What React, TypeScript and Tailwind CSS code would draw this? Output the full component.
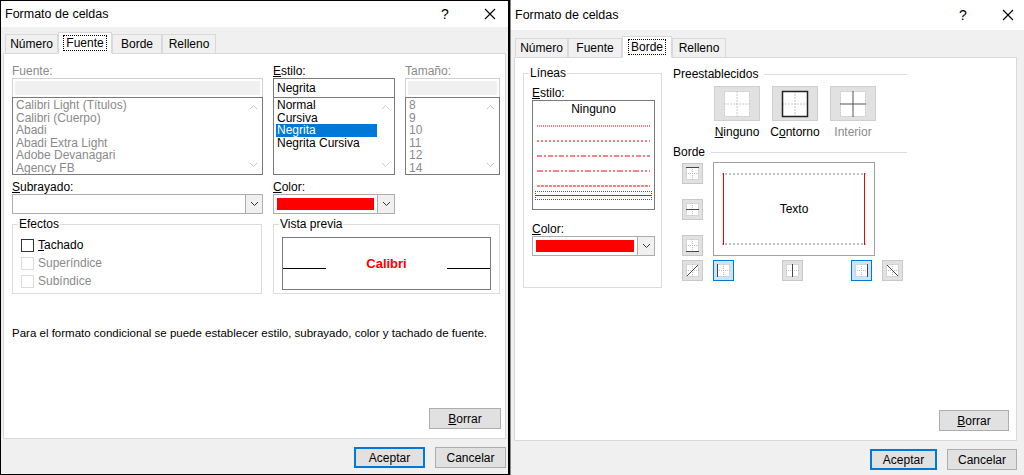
import React from "react";

const F = { fontFamily: '"Segoe UI","Liberation Sans",Arial,sans-serif' };

function TitleBar() {
  return (
    <div className="flex items-center h-[26px] bg-white pl-[4px] text-[12.5px] text-black shrink-0">
      <span className="flex-1">Formato de celdas</span>
      <span className="w-[43px] text-[14px]">?</span>
      <svg width="12" height="12" className="mr-[12px]"><path d="M1 1L11 11M11 1L1 11" stroke="#000" strokeWidth="1.1" /></svg>
    </div>
  );
}

function Tabs({ active }: { active: string }) {
  const tabs = [["Número", 53], ["Fuente", 54], ["Borde", 50], ["Relleno", 54]] as const;
  return (
    <div className="flex items-end h-[26px] pl-[4px] bg-[#f0f0f0] shrink-0 relative z-10">
      {tabs.map(([t, w]) =>
        t === active ? (
          <div key={t} style={{ width: w }} className="h-[22px] -mb-px bg-white border border-[#d9d9d9] border-b-white flex items-center justify-center text-[12px]">
            <span className="border border-dotted border-black px-[2px] leading-[14px]">{t}</span>
          </div>
        ) : (
          <div key={t} style={{ width: w }} className="h-[19px] bg-[#f0f0f0] border border-[#d9d9d9] border-b-0 flex items-center justify-center text-[12px]">{t}</div>
        )
      )}
    </div>
  );
}

function Btn({ children, w, primary }: { children: React.ReactNode; w: number; primary?: boolean }) {
  return (
    <div style={{ width: w }} className={`h-[21px] flex items-center justify-center text-[12px] bg-[#e1e1e1] ${primary ? "border-2 border-[#0078d7]" : "border border-[#adadad]"}`}>{children}</div>
  );
}

function Arrow({ up }: { up?: boolean }) {
  return <svg width="9" height="6"><path d={up ? "M1 5L4.5 1.5L8 5" : "M1 1L4.5 4.5L8 1"} stroke="#c8c8c8" fill="none" /></svg>;
}

function ListBox({ w, items, sel, gray }: { w: number; items: string[]; sel?: number; gray?: boolean }) {
  return (
    <div style={{ width: w }} className="h-[78px] border border-[#7a7a7a] bg-white flex">
      <div className="flex-1 pt-[1px] pl-[2px] text-[12px] leading-[12.6px]">
        {items.map((t, i) => (
          <div key={t} className={`${i === sel ? "bg-[#0078d7] text-white" : gray ? "text-[#8a8a8a]" : "text-black"} pl-[1px]`}>{t}</div>
        ))}
      </div>
      <div className="w-[17px] flex flex-col justify-between items-center py-[6px]"><Arrow up /><Arrow /></div>
    </div>
  );
}

function Combo({ w, red }: { w: number; red?: boolean }) {
  return (
    <div style={{ width: w }} className="h-[20px] border border-[#adadad] bg-white flex">
      <div className="flex-1 p-[3px]">{red && <div className="h-full bg-[#ff0000]" />}</div>
      <div className="w-[17px] border-l border-[#adadad] bg-[#f0f0f0] flex items-center justify-center">
        <svg width="9" height="6"><path d="M1 1L4.5 4.5L8 1" stroke="#333" fill="none" /></svg>
      </div>
    </div>
  );
}

function Group({ title, className, children }: { title: string; className: string; children?: React.ReactNode }) {
  return (
    <div className={`relative border border-[#dcdcdc] ${className}`}>
      <span className="absolute -top-[8px] left-[5px] bg-white px-[1px] text-[12px] leading-[14px]">{title}</span>
      {children}
    </div>
  );
}

function Check({ label, dis, u }: { label: string; dis?: boolean; u?: boolean }) {
  return (
    <div className="flex items-center gap-[4px] h-[18px]">
      <div className={`w-[13px] h-[13px] border ${dis ? "border-[#dcdcdc]" : "border-[#333]"} bg-white`} />
      <span className={dis ? "text-[#8a8a8a]" : ""}>{u ? <><u>T</u>achado</> : label}</span>
    </div>
  );
}

function Footer() {
  return (
    <div className="flex justify-end gap-[10px] pr-[2px] pt-[8px] h-[35px] bg-[#f0f0f0] shrink-0">
      <Btn w={71} primary>Aceptar</Btn>
      <Btn w={71}>Cancelar</Btn>
    </div>
  );
}

function LeftDialog() {
  return (
    <div className="w-[507px] h-[473px] bg-[#f0f0f0] flex flex-col shrink-0">
      <TitleBar />
      <Tabs active="Fuente" />
      <div className="mx-[2px] h-[388px] bg-white border border-[#d9d9d9] text-[12px] pl-[8px] pr-[4px] pt-[8px] flex flex-col">
        <div className="flex gap-[10px]">
          <div>
            <div className="h-[16px] text-[#8a8a8a]">Fuente:</div>
            <div className="w-[251px] h-[19px] border border-[#d0d0d0] border-b-0 bg-white p-[2px]"><div className="h-full bg-[#f0f0f0]" /></div>
            <ListBox w={251} gray items={["Calibri Light (Títulos)", "Calibri (Cuerpo)", "Abadi", "Abadi Extra Light", "Adobe Devanagari", "Agency FB"]} />
          </div>
          <div>
            <div className="h-[16px]"><u>E</u>stilo:</div>
            <div className="w-[122px] h-[19px] border border-[#7a7a7a] border-b-0 bg-white pl-[3px] leading-[18px]">Negrita</div>
            <ListBox w={122} sel={2} items={["Normal", "Cursiva", "Negrita", "Negrita Cursiva"]} />
          </div>
          <div>
            <div className="h-[16px] text-[#8a8a8a]">Tamaño:</div>
            <div className="w-[95px] h-[19px] border border-[#d0d0d0] border-b-0 bg-white p-[2px]"><div className="h-full bg-[#f0f0f0]" /></div>
            <ListBox w={95} gray items={["8", "9", "10", "11", "12", "14"]} />
          </div>
        </div>
        <div className="flex gap-[10px] mt-[3px]">
          <div><div className="h-[16px]"><u>S</u>ubrayado:</div><Combo w={251} /></div>
          <div><div className="h-[16px]"><u>C</u>olor:</div><Combo w={122} red /></div>
        </div>
        <div className="flex gap-[11px] mt-[10px]">
          <Group title="Efectos" className="w-[250px] h-[70px] pt-[11px] pl-[8px]">
            <Check label="Tachado" u />
            <Check label="Superíndice" dis />
            <Check label="Subíndice" dis />
          </Group>
          <Group title="Vista previa" className="w-[227px] h-[70px] pt-[12px] px-[8px]">
            <div className="relative h-[53px] border border-[#7a7a7a] flex items-center justify-center">
              <div className="absolute left-0 top-[30px] w-[43px] border-t border-black" />
              <div className="absolute right-0 top-[30px] w-[43px] border-t border-black" />
              <span className="text-[#ff0000] font-bold text-[13px]">Calibri</span>
            </div>
          </Group>
        </div>
        <div className="mt-[31px] whitespace-nowrap text-[11.5px]">Para el formato condicional se puede establecer estilo, subrayado, color y tachado de fuente.</div>
        <div className="flex-1" />
        <div className="flex justify-end mb-[9px]"><Btn w={72}><u>B</u>orrar</Btn></div>
      </div>
      <Footer />
    </div>
  );
}

function LineRow({ dash, w = 1, mt = 0 }: { dash?: string; w?: number; mt?: number }) {
  return (
    <svg width="117" height="23" style={{ marginTop: mt }}>
      <line x1="2" y1="12" x2="115" y2="12" stroke="#ff0000" strokeWidth={w} strokeDasharray={dash} />
    </svg>
  );
}

function Tool({ kind, sel }: { kind: string; sel?: boolean }) {
  const g = "#bdbdbd";
  return (
    <div className={`w-[21px] h-[21px] flex items-center justify-center ${sel ? "border border-[#0078d7] bg-[#cce4f7]" : "border border-[#c8c8c8] bg-[#e1e1e1]"}`}>
      <svg width="15" height="15">
        <rect x="1.5" y="1.5" width="12" height="12" fill="#fff" stroke={g} strokeDasharray="1 1" />
        <line x1="7.5" y1="1" x2="7.5" y2="14" stroke={g} strokeDasharray="1 1" />
        <line x1="1" y1="7.5" x2="14" y2="7.5" stroke={g} strokeDasharray="1 1" />
        {kind === "top" && <line x1="1" y1="1.5" x2="14" y2="1.5" stroke="#444" />}
        {kind === "mid" && <line x1="1" y1="7.5" x2="14" y2="7.5" stroke="#444" />}
        {kind === "bot" && <line x1="1" y1="13.5" x2="14" y2="13.5" stroke="#444" />}
        {kind === "left" && <line x1="1.5" y1="1" x2="1.5" y2="14" stroke="#444" />}
        {kind === "vmid" && <line x1="7.5" y1="1" x2="7.5" y2="14" stroke="#444" />}
        {kind === "right" && <line x1="13.5" y1="1" x2="13.5" y2="14" stroke="#444" />}
        {kind === "d1" && <line x1="2" y1="13" x2="13" y2="2" stroke="#444" />}
        {kind === "d2" && <line x1="2" y1="2" x2="13" y2="13" stroke="#444" />}
      </svg>
    </div>
  );
}

function Preset({ kind, label, dis }: { kind: string; label: React.ReactNode; dis?: boolean }) {
  const g = "#c8c8c8";
  return (
    <div className="flex flex-col items-center w-[58px]">
      <div className="w-[46px] h-[35px] bg-[#e1e1e1] border border-[#cfcfcf] flex items-center justify-center">
        <svg width="28" height="28">
          <rect x="1.5" y="1.5" width="25" height="25" fill="#fff" stroke={g} strokeDasharray="2 1" />
          <line x1="14" y1="1" x2="14" y2="27" stroke={kind === "int" ? "#555" : g} strokeDasharray={kind === "int" ? undefined : "2 1"} />
          <line x1="1" y1="14" x2="27" y2="14" stroke={kind === "int" ? "#555" : g} strokeDasharray={kind === "int" ? undefined : "2 1"} />
          {kind === "out" && <rect x="1.5" y="1.5" width="25" height="25" fill="none" stroke="#222" strokeWidth="1.5" />}
        </svg>
      </div>
      <div className={`mt-[2px] text-[12px] whitespace-nowrap ${dis ? "text-[#8a8a8a]" : ""}`}>{label}</div>
    </div>
  );
}

function RightDialog() {
  return (
    <div className="flex-1 h-[475px] bg-[#f0f0f0] flex flex-col border-l border-[#888]">
      <div className="flex items-center h-[30px] bg-white pl-[4px] text-[12.5px] shrink-0">
        <span className="flex-1">Formato de celdas</span>
        <span className="w-[43px] text-[14px]">?</span>
        <svg width="12" height="12" className="mr-[10px]"><path d="M1 1L11 11M11 1L1 11" stroke="#000" strokeWidth="1.1" /></svg>
      </div>
      <div className="h-[27px] flex flex-col justify-end"><Tabs active="Borde" /></div>
      <div className="ml-[3px] mr-[7px] h-[384px] bg-white border border-[#d9d9d9] text-[12px] flex flex-col">
        <div className="flex pt-[15px] pl-[8px]">
          <Group title="Líneas" className="w-[139px] h-[215px] pl-[8px] pt-[10px]">
            <div className="h-[16px]"><u>E</u>stilo:</div>
            <div className="w-[123px] h-[110px] border border-[#7a7a7a] flex flex-col items-center pt-[1px]">
              <div className="h-[14px] leading-[14px]">Ninguno</div>
              <LineRow dash="1 1" mt={-2} />
              <LineRow dash="2 2" mt={-8} />
              <LineRow dash="5 2 2 2" mt={-8} />
              <LineRow dash="6 2 2 2 2 2" mt={-8} />
              <LineRow dash="3 1" mt={-8} />
              <div className="-mt-[6px] w-[117px] h-[9px] border border-dotted border-[#555] flex items-center"><div className="w-full border-t border-[#ff0000]" /></div>
            </div>
            <div className="mt-[10px] h-[16px]"><u>C</u>olor:</div>
            <Combo w={123} red />
          </Group>
          <div className="ml-[11px] w-[234px]">
            <div className="flex items-center gap-[6px] -mt-[8px]"><span>Preestablecidos</span><div className="flex-1 border-t border-[#dcdcdc]" /></div>
            <div className="flex pl-[35px] mt-[3px] gap-0">
              <Preset kind="none" label={<><u>N</u>inguno</>} />
              <Preset kind="out" label={<>C<u>o</u>ntorno</>} />
              <Preset kind="int" label="Interior" dis />
            </div>
            <div className="flex items-center gap-[6px] mt-[2px]"><span>Borde</span><div className="flex-1 border-t border-[#dcdcdc]" /></div>
            <div className="flex mt-[1px]">
              <div className="pl-[9px] w-[40px] flex flex-col gap-[15px] pt-[1px]">
                <Tool kind="top" /><Tool kind="mid" /><Tool kind="bot" />
              </div>
              <div className="relative w-[162px] h-[94px] border border-[#a0a0a0] bg-white flex items-center justify-center">
                <div className="absolute left-[8px] right-[8px] top-[10px] border-t-2 border-dotted border-[#c0c0c0]" />
                <div className="absolute left-[8px] right-[8px] bottom-[10px] border-t-2 border-dotted border-[#c0c0c0]" />
                <div className="absolute left-[9px] top-[10px] bottom-[10px] border-l border-[#ff0000]" />
                <div className="absolute right-[9px] top-[10px] bottom-[10px] border-l border-[#ff0000]" />
                <span>Texto</span>
              </div>
            </div>
            <div className="flex items-center mt-[4px] pl-[9px]">
              <Tool kind="d1" />
              <div className="ml-[10px]"><Tool kind="left" sel /></div>
              <div className="ml-[48px]"><Tool kind="vmid" /></div>
              <div className="ml-[48px]"><Tool kind="right" sel /></div>
              <div className="ml-[10px]"><Tool kind="d2" /></div>
            </div>
          </div>
        </div>
        <div className="flex-1" />
        <div className="flex justify-end mb-[9px] mr-[7px]"><Btn w={70}><u>B</u>orrar</Btn></div>
      </div>
      <div className="flex justify-end gap-[10px] pr-[7px] pt-[8px] bg-[#f0f0f0]">
        <Btn w={67} primary>Aceptar</Btn>
        <Btn w={70}>Cancelar</Btn>
      </div>
    </div>
  );
}

export default function App() {
  return (
    <div style={F} className="w-[1024px] h-[475px] bg-black flex text-black overflow-hidden">
      <div className="ml-[1px] mt-[1px] flex"><LeftDialog /></div>
      <div className="w-[2px] shrink-0" />
      <RightDialog />
    </div>
  );
}
